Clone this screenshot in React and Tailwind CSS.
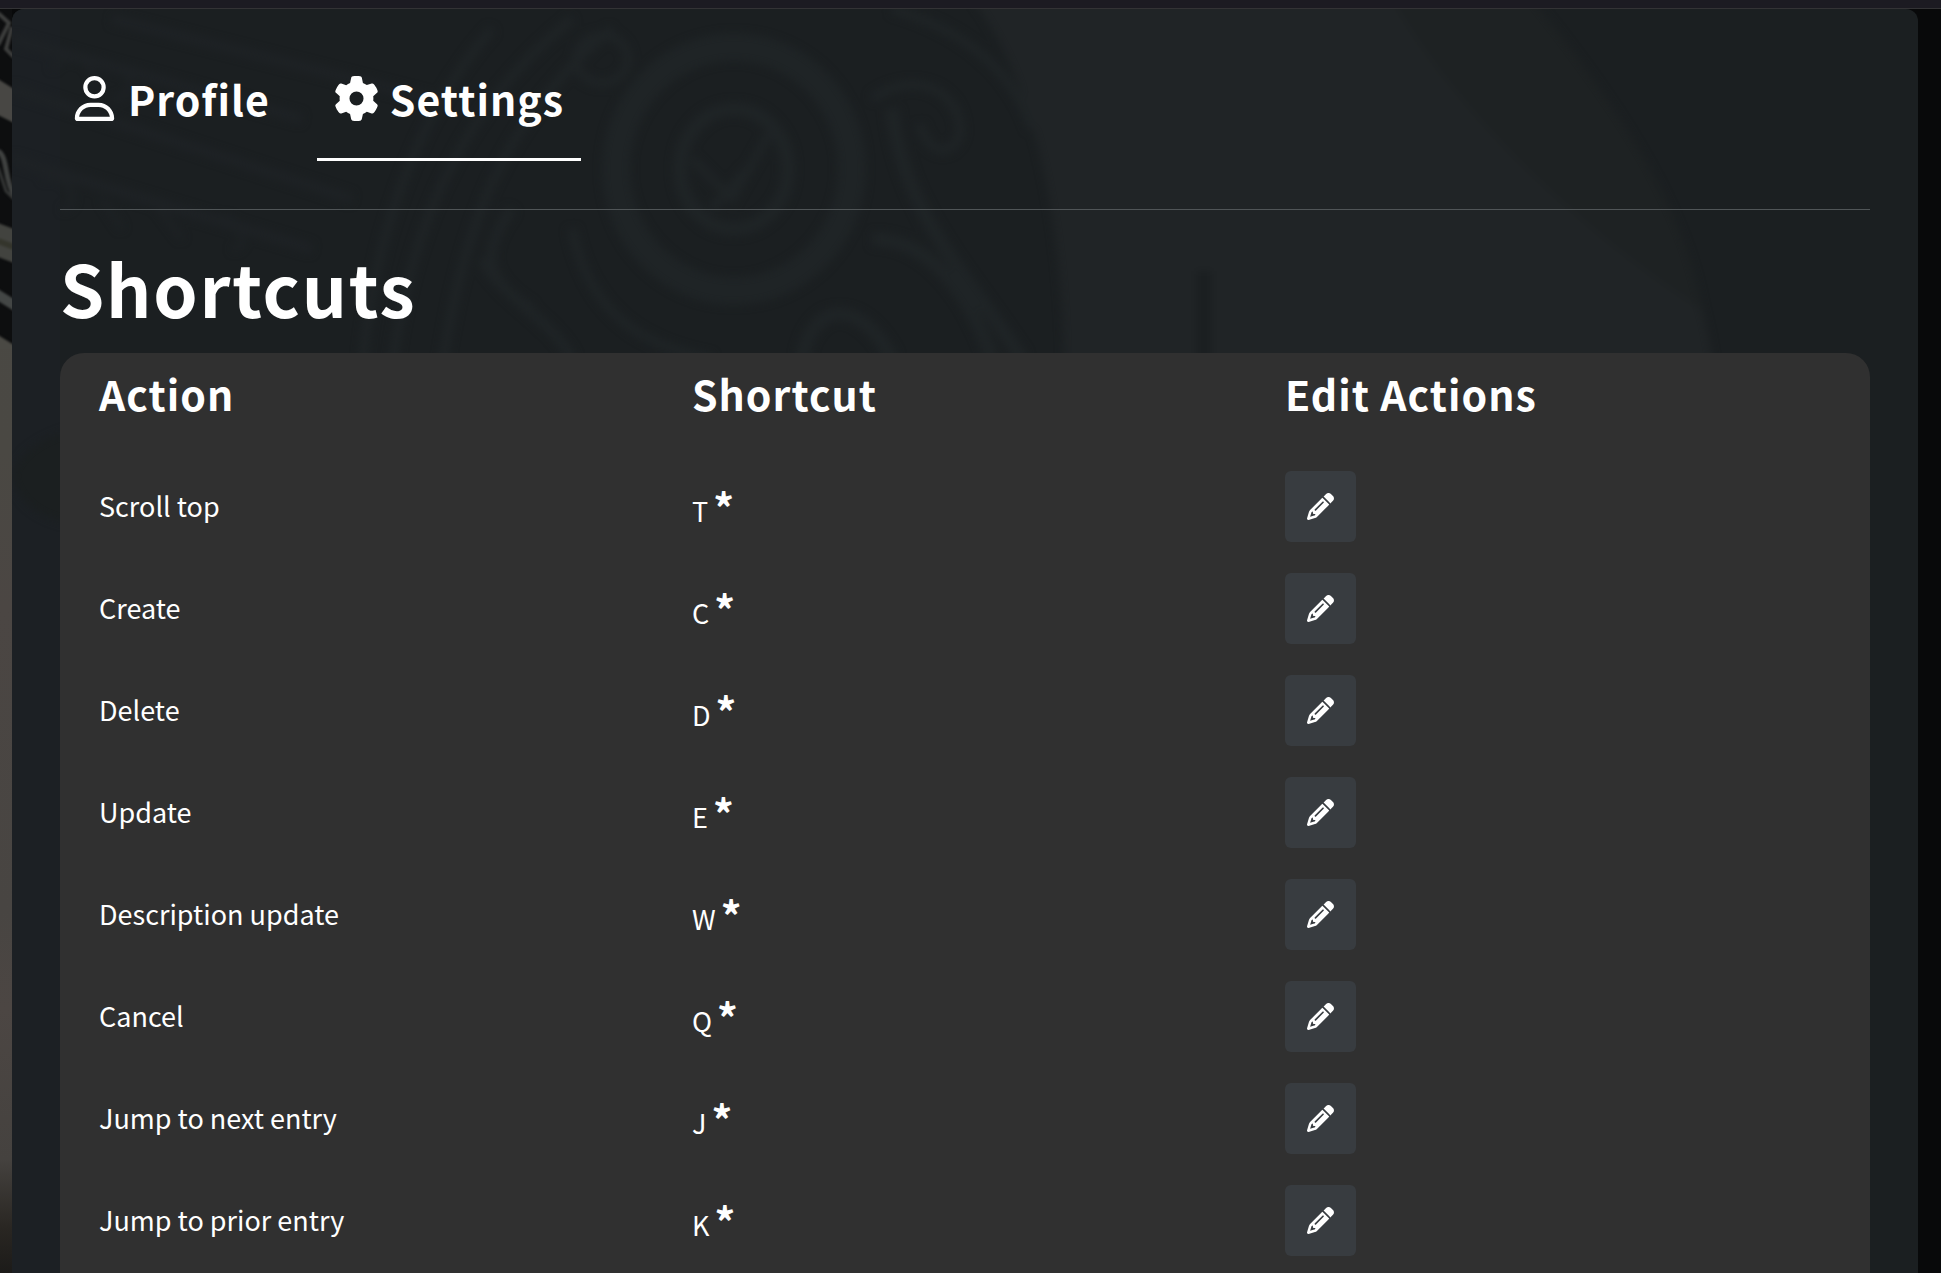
import { FaGear, FaPencil, FaRegUser } from "react-icons/fa6";

const shortcuts = [
  { action: "Scroll top", key: "T" },
  { action: "Create", key: "C" },
  { action: "Delete", key: "D" },
  { action: "Update", key: "E" },
  { action: "Description update", key: "W" },
  { action: "Cancel", key: "Q" },
  { action: "Jump to next entry", key: "J" },
  { action: "Jump to prior entry", key: "K" },
];

const columns = ["Action", "Shortcut", "Edit Actions"];

function StoneEdge() {
  return (
    <svg aria-hidden="true" className="h-[340px] w-3" viewBox="0 0 12 340" fill="none">
      <defs>
        <filter id="stone-soften" x="-20%" y="-5%" width="140%" height="110%" colorInterpolationFilters="sRGB">
          <feGaussianBlur stdDeviation="1" />
        </filter>
      </defs>
      <path d="M0 0H12V340H0Z" fill="#0d0e0f" />
      <g filter="url(#stone-soften)">
        <path d="M-2 4L9 14L-2 36M12 18L6 40L14 48" stroke="#3d3e3d" strokeWidth="4" />
        <path d="M-2 70L14 80V114L-2 106Z" fill="#484744" />
        <path d="M-2 142C8 148 4 170 14 186" stroke="#3f4140" strokeWidth="5" />
        <path d="M-2 158L6 182L14 190" stroke="#353736" strokeWidth="3" />
        <path d="M-2 214L14 220V254L-2 248Z" fill="#42433f" />
        <path d="M-2 232L14 238" stroke="#34352c" strokeWidth="6" />
        <path d="M-2 280L14 290V302L-2 292Z" fill="#434645" />
        <path d="M-2 326L14 336V346H-2Z" fill="#4a4944" />
      </g>
    </svg>
  );
}

function CarvedBackdrop() {
  return (
    <svg
      aria-hidden="true"
      className="absolute left-0 top-0 h-[660px] w-full"
      viewBox="0 0 1906 660"
      preserveAspectRatio="xMinYMin slice"
      fill="none"
    >
      <defs>
        <filter id="soften" x="-5%" y="-5%" width="110%" height="110%" colorInterpolationFilters="sRGB">
          <feGaussianBlur stdDeviation="4" />
        </filter>
      </defs>
      <g filter="url(#soften)">
        <path d="M960 -10H1510C1590 90 1680 200 1702 360H1052C1050 200 1020 70 960 -10Z" fill="#202426" />
        <path d="M1380 -10H1520C1600 90 1670 190 1690 300C1610 250 1460 130 1380 -10Z" fill="#1e2223" />
        <path d="M1192 262V350" stroke="#1b1f21" strokeWidth="16" />
        <g stroke="#1f2426">
          <ellipse cx="722" cy="160" rx="118" ry="122" strokeWidth="28" />
          <ellipse cx="722" cy="160" rx="54" ry="60" strokeWidth="14" />
          <path d="M680 150L720 190L760 120M700 200L735 160" strokeWidth="8" />
          <path d="M560 10C460 90 400 200 380 360M600 20C490 110 450 220 430 360M350 360C360 240 400 110 480 20" strokeWidth="9" />
          <path d="M560 220C580 320 650 340 700 350M860 90C900 60 950 80 948 125C940 150 915 145 908 115" strokeWidth="9" />
          <path d="M880 100C890 200 950 260 1010 350M860 230C920 230 960 290 980 350M790 350C800 290 850 290 880 350" strokeWidth="14" />
          <path d="M880 0C950 20 1000 60 1020 120" strokeWidth="9" />
          <ellipse cx="590" cy="50" rx="26" ry="24" strokeWidth="8" />
          <path d="M470 250C490 290 540 310 560 350M500 200C470 240 470 270 520 300" strokeWidth="10" />
        </g>
        <g stroke="#1e2225" strokeWidth="10">
          <path d="M0 30L290 110M0 80L340 190M0 150L300 240M100 10L420 90" />
          <path d="M40 60C50 40 90 50 80 80M90 60C120 50 130 90 100 90M30 170C60 160 70 200 50 200M90 190L110 220M140 190L170 230M200 210C230 200 240 240 220 240" strokeWidth="5" />
        </g>
        <path d="M0 465C10 440 30 430 60 420V515C30 510 5 495 0 465Z" fill="#1b1f20" />
      </g>
    </svg>
  );
}

function Tab({ icon: Icon, label, selected }) {
  return (
    <button
      type="button"
      role="tab"
      aria-selected={selected}
      className={
        "flex items-start gap-[11px] border-b-3 px-[17px] pb-8 text-[41px] leading-[56px] font-bold tracking-wide " +
        (selected ? "border-white" : "border-transparent")
      }
    >
      <Icon aria-hidden="true" className="mt-[6px] size-[45px] w-auto" />
      {label}
    </button>
  );
}

export default function App() {
  return (
    <div
      className="flex min-h-screen flex-col bg-[#08090a] text-white"
      style={{ fontFamily: '"Noto Sans CJK SC", "Noto Sans", sans-serif' }}
    >
      <div className="h-[9px] shrink-0 border-b border-[#333335] bg-[#1c1b22]" />
      <div className="flex flex-1">
        <div className="w-3 shrink-0 bg-[linear-gradient(to_bottom,#4a4944_0px,#4a4843_440px,#4b4643_600px,#484542_900px,#4c4643_1000px,#45423f_1150px,#292622_1220px,#1c1b19_1264px)]">
          <StoneEdge />
        </div>
        <main className="relative mr-[23px] flex min-w-0 flex-1 flex-col overflow-hidden rounded-t-xl bg-[#1b1f21] px-12">
          <div aria-hidden="true" className="absolute inset-y-0 left-0 w-12 bg-[#1c2024]" />
          <CarvedBackdrop />
          <div className="relative">
            <div className="border-b border-[#505557] pt-[61px] pb-12">
              <div role="tablist" className="-ml-[5px] flex gap-[30px]">
                <Tab icon={FaRegUser} label="Profile" selected={false} />
                <Tab icon={FaGear} label="Settings" selected />
              </div>
            </div>
            <h1 className="pt-[30px] pb-[18px] text-[71px] leading-[95px] font-bold tracking-wide">Shortcuts</h1>
          </div>
          <div className="relative flex-1 rounded-t-3xl bg-[#303030] pr-4 pl-[15px]">
            <table className="w-full table-fixed text-left">
              <thead>
                <tr className="h-[102px] align-top">
                  {columns.map((column) => (
                    <th
                      key={column}
                      scope="col"
                      className="px-6 pt-3 text-[41px] leading-[56px] font-bold tracking-wide"
                    >
                      {column}
                    </th>
                  ))}
                </tr>
              </thead>
              <tbody>
                {shortcuts.map(({ action, key }) => (
                  <tr key={action} className="h-[102px] text-[27px] leading-10">
                    <td className="px-6">{action}</td>
                    <td className="px-6">
                      <span className="flex items-end gap-[5px]">
                        <span className="leading-8">{key}</span>
                        <span className="text-[41px] leading-[42px] font-bold">*</span>
                      </span>
                    </td>
                    <td className="px-6">
                      <button
                        type="button"
                        aria-label={"Edit shortcut: " + action}
                        className="flex size-[71px] items-center justify-center rounded-md bg-[#383c40]"
                      >
                        <FaPencil aria-hidden="true" className="size-[27px]" />
                      </button>
                    </td>
                  </tr>
                ))}
              </tbody>
            </table>
          </div>
        </main>
      </div>
    </div>
  );
}
